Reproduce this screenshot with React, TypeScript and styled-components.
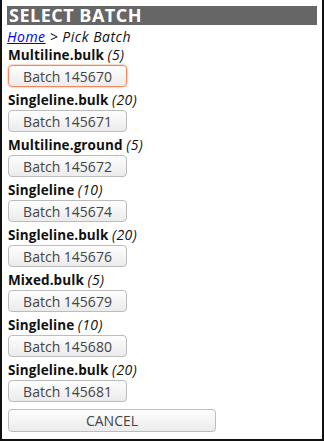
import React from 'react';
import styled, { createGlobalStyle } from 'styled-components';

const GlobalStyle = createGlobalStyle`
  html, body {
    margin: 0;
    padding: 0;
    background: #ffffff;
  }
  body {
    font-family: 'Open Sans', 'DejaVu Sans', sans-serif;
  }
`;

type Batch = { type: string; count: number; id: number };

const batches: Batch[] = [
  { type: 'Multiline.bulk', count: 5, id: 145670 },
  { type: 'Singleline.bulk', count: 20, id: 145671 },
  { type: 'Multiline.ground', count: 5, id: 145672 },
  { type: 'Singleline', count: 10, id: 145674 },
  { type: 'Singleline.bulk', count: 20, id: 145676 },
  { type: 'Mixed.bulk', count: 5, id: 145679 },
  { type: 'Singleline', count: 10, id: 145680 },
  { type: 'Singleline.bulk', count: 20, id: 145681 },
];

const App: React.FC = () => {
  return (
    <>
      <GlobalStyle />
      <Frame>
        <Header>SELECT BATCH</Header>
        <Crumbs>
          <a href="#">Home</a> &gt; Pick Batch
        </Crumbs>
        <List>
          {batches.map((b, i) => (
            <Group key={b.id}>
              <Label>
                {b.type} <em>({b.count})</em>
              </Label>
              <BatchButton $focused={i === 0}>Batch {b.id}</BatchButton>
            </Group>
          ))}
          <CancelButton>CANCEL</CancelButton>
        </List>
      </Frame>
    </>
  );
};

export default App;

const Frame = styled.div`
  box-sizing: border-box;
  width: 324px;
  height: 441px;
  padding: 6px 5px 0 5px;
  border: 2px solid #111111;
  border-top: none;
  overflow: hidden;
`;

const Header = styled.div`
  height: 19px;
  background: #666666;
  color: #ffffff;
  font-weight: 700;
  font-size: 18px;
  line-height: 19px;
  padding-left: 2px;
  letter-spacing: 0.5px;
`;

const Crumbs = styled.div`
  margin-top: 3px;
  height: 18px;
  line-height: 18px;
  font-size: 14px;
  font-style: italic;
  color: #111111;
  letter-spacing: 0.5px;

  a {
    color: #0000ee;
    text-decoration: underline;
  }
`;

const List = styled.div`
  display: flex;
  flex-direction: column;
  padding-left: 1px;
`;

const Group = styled.div`
  display: flex;
  flex-direction: column;
  align-items: flex-start;
  margin-bottom: 4px;
`;

const Label = styled.div`
  height: 18px;
  line-height: 18px;
  font-size: 13.5px;
  font-weight: 700;
  color: #111111;
  letter-spacing: 0.1px;

  em {
    font-weight: 400;
    font-style: italic;
    font-size: 14px;
    letter-spacing: 0.4px;
  }
`;

const ButtonBase = styled.button`
  box-sizing: border-box;
  height: 22px;
  padding: 0;
  font-family: 'Open Sans', 'DejaVu Sans', sans-serif;
  font-size: 14px;
  color: #444444;
  background: linear-gradient(#fefefe, #ebebeb);
  border: 1px solid #bcbcbc;
  border-radius: 4px;
  cursor: pointer;
`;

const BatchButton = styled(ButtonBase)<{ $focused?: boolean }>`
  width: 119px;
  margin-top: 1px;
  border-color: ${(p) => (p.$focused ? '#ee8a5f' : '#bcbcbc')};
  box-shadow: ${(p) => (p.$focused ? '0 0 1px 1px rgba(240, 140, 90, 0.35)' : 'none')};
`;

const CancelButton = styled(ButtonBase)`
  width: 208px;
  height: 23px;
  margin-top: 3px;
`;
